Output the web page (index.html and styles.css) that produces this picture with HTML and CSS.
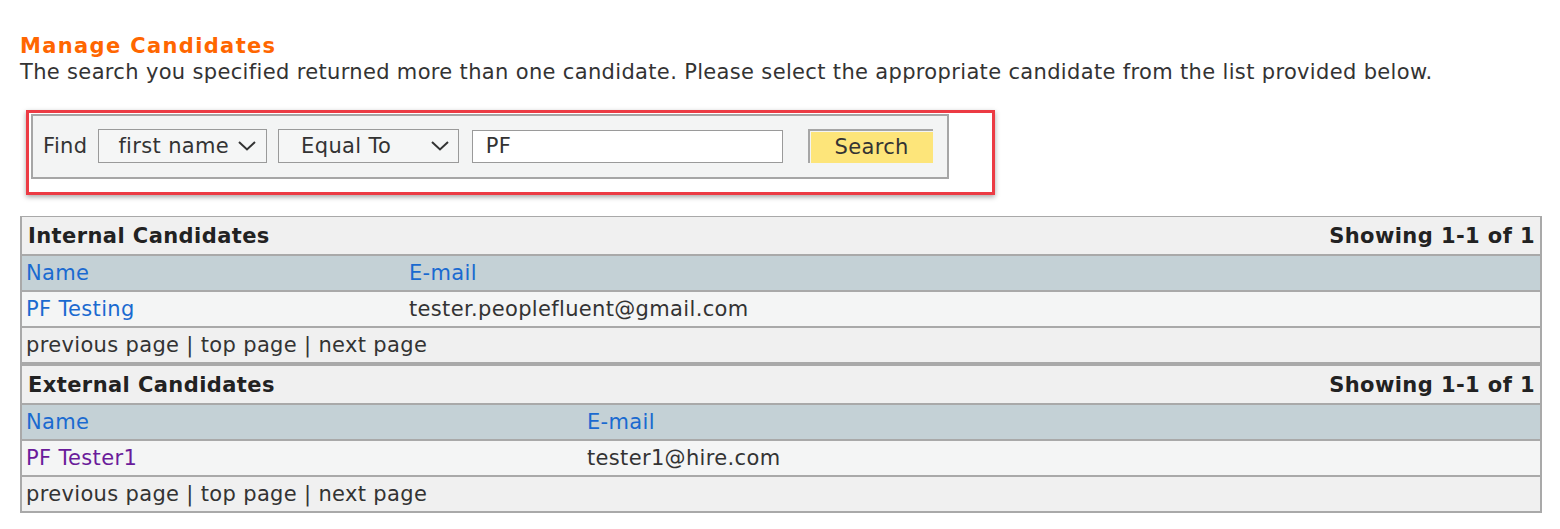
FILE: index.html
```html
<!DOCTYPE html>
<html lang="en">
<head>
    <meta charset="UTF-8">
    <title>Manage Candidates</title>
    <link rel="stylesheet" href="styles.css">
</head>
<body>
    <div class="page">
        <h1 class="title">Manage Candidates</h1>
        <p class="intro">The search you specified returned more than one candidate. Please select the appropriate candidate from the list provided below.</p>

        <div class="highlight">
            <form class="finder">
                <span class="find-label">Find</span>
                <div class="fake-select select-field">
                    <span>first name</span>
                    <svg width="20" height="12" viewBox="0 0 20 12"><path d="M2 2 L10 9.5 L18 2" fill="none" stroke="#333" stroke-width="2"/></svg>
                </div>
                <div class="fake-select select-op">
                    <span>Equal To</span>
                    <svg width="20" height="12" viewBox="0 0 20 12"><path d="M2 2 L10 9.5 L18 2" fill="none" stroke="#333" stroke-width="2"/></svg>
                </div>
                <input type="text" class="query" value="PF">
                <button type="button" class="search-btn">Search</button>
            </form>
        </div>

        <div class="results first">
            <div class="results-head">
                <span>Internal Candidates</span>
                <span>Showing 1-1 of 1</span>
            </div>
            <table class="grid internal">
                <tr class="cols">
                    <td class="name-col"><a href="#">Name</a></td>
                    <td><a href="#">E-mail</a></td>
                </tr>
                <tr class="data">
                    <td><a href="#">PF Testing</a></td>
                    <td>tester.peoplefluent@gmail.com</td>
                </tr>
            </table>
            <div class="pager">previous page | top page | next page</div>
        </div>
        <div class="results second">
            <div class="results-head">
                <span>External Candidates</span>
                <span>Showing 1-1 of 1</span>
            </div>
            <table class="grid external">
                <tr class="cols">
                    <td class="name-col"><a href="#">Name</a></td>
                    <td><a href="#">E-mail</a></td>
                </tr>
                <tr class="data">
                    <td><a href="#" class="visited">PF Tester1</a></td>
                    <td>tester1@hire.com</td>
                </tr>
            </table>
            <div class="pager">previous page | top page | next page</div>
        </div>
    </div>
</body>
</html>
```

FILE: styles.css
```css
body {
    margin: 0;
    background-color: white;
    font-family: "DejaVu Sans", Verdana, sans-serif;
    font-size: 21px;
    letter-spacing: 0.34px;
    color: #333;
}
.page {
    padding: 33px 18px 0 20px;
}
.title {
    margin: 0;
    font-size: 21px;
    line-height: 26px;
    font-weight: bold;
    letter-spacing: 1.35px;
    color: #ff6600;
}
.intro {
    margin: 0;
    line-height: 26px;
}
.highlight {
    width: 969px;
    box-sizing: border-box;
    margin: 25px 0 0 6px;
    padding: 1px 0 13px 2px;
    border: 3px solid #ec3b44;
    box-shadow: 0 2px 5px rgba(0,0,0,0.35);
}
.finder {
    display: flex;
    align-items: center;
    width: 918px;
    box-sizing: border-box;
    margin: 0;
    padding: 13px 14px 14px 10px;
    background-color: #f3f4f4;
    border: 2px solid #a6a6a6;
}
.find-label {
    margin-right: 11px;
}
.fake-select {
    display: flex;
    align-items: center;
    justify-content: space-between;
    height: 34px;
    box-sizing: border-box;
    background-color: #f5f6f6;
    border: 1px solid #9a9a9a;
}
.select-field {
    width: 169px;
    padding: 0 9px 0 19px;
    margin-right: 11px;
}
.select-op {
    width: 181px;
    padding: 0 8px 0 22px;
    margin-right: 13px;
}
.query {
    width: 312px;
    height: 33px;
    box-sizing: border-box;
    padding: 0 13px;
    border: 1px solid #9a9a9a;
    font-family: inherit;
    font-size: 21px;
    letter-spacing: 0.34px;
    color: #333;
    margin-right: 25px;
}
.search-btn {
    width: 125px;
    height: 34px;
    box-sizing: border-box;
    padding: 0;
    border: none;
    border-top: 2px solid #a6a6a6;
    border-left: 2px solid #a6a6a6;
    background-color: #fde57a;
    box-shadow: inset 1px 1px 0 #f3f4f4;
    font-family: inherit;
    font-size: 21px;
    letter-spacing: 0.34px;
    color: #333;
    cursor: pointer;
}
.results {
    width: 1522px;
    box-sizing: border-box;
    border: 2px solid #a9a9a9;
    border-top-width: 1px;
    border-bottom: none;
}
.first {
    margin-top: 21px;
}
.second {
    border-top: 2px solid #a9a9a9;
}
.results-head {
    display: flex;
    justify-content: space-between;
    height: 37px;
    align-items: center;
    padding: 0 5px 0 6px;
    background-color: #f0f0f0;
    border-bottom: 2px solid #a9a9a9;
    font-weight: bold;
    letter-spacing: 0.42px;
    color: #222;
}
.grid {
    width: 100%;
    border-collapse: collapse;
}
.grid td {
    height: 34px;
    padding: 0 0 0 4px;
    border-bottom: 2px solid #a9a9a9;
    vertical-align: middle;
}
.internal .name-col {
    width: 379px;
}
.external .name-col {
    width: 557px;
}
.cols td {
    background-color: #c4d1d6;
}
.data td {
    background-color: #f4f5f5;
}
a {
    color: #1a6ad0;
    text-decoration: none;
}
a.visited {
    color: #6a1b9a;
}
.pager {
    height: 34px;
    display: flex;
    align-items: center;
    padding-left: 4px;
    background-color: #f0f0f0;
    border-bottom: 2px solid #a9a9a9;
}
```
